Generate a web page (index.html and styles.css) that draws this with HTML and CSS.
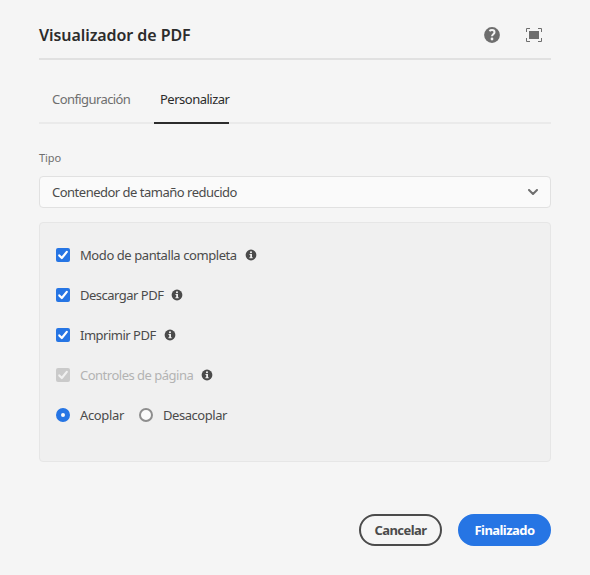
FILE: index.html
```html
<!DOCTYPE html>
<html lang="es">
<head>
<meta charset="utf-8">
<title>Visualizador de PDF</title>
<link rel="stylesheet" href="styles.css">
</head>
<body>
<svg class="defs" width="0" height="0">
  <symbol id="check" viewBox="0 0 14 14"><path d="M3.3 7.4 5.8 10 10.8 3.9" fill="none" stroke="currentColor" stroke-width="2.200" stroke-linecap="round" stroke-linejoin="round"/></symbol>
  <symbol id="info" viewBox="0 0 12 12"><circle cx="6" cy="6" r="5.4" fill="#4b4b4b"/><circle cx="6" cy="3.3" r="1.05" fill="#f0f0f0"/><path d="M4.5 5.1H7v3.2h.7v1H4.4v-1h.8V6.1h-.7z" fill="#f0f0f0"/></symbol>
</svg>
<main class="dialog">
  <header class="header">
    <h1 class="title">Visualizador de PDF</h1>
    <svg class="help" viewBox="0 0 16 16"><circle cx="8" cy="8" r="7.9" fill="#6e6e6e"/><path d="M5.400 4.1C6.200 3.400 7 3.100 8 3.100c1.600 0 2.500.900 2.500 2.200 0 1.900-2.500 2-2.500 4" fill="none" stroke="#f5f5f5" stroke-width="2"/><circle cx="8" cy="12" r="1.4" fill="#f5f5f5"/></svg>
    <svg class="full" viewBox="0 0 16 14"><path d="M3 3h10v8H3z" fill="#6e6e6e"/><path d="M.5 4V.5H4M12 .5h3.500V4M15.500 10v3.500H12M4 13.500H.5V10" fill="none" stroke="#6e6e6e"/></svg>
  </header>
  <nav class="tabs"><a class="tab config">Configuración</a><a class="tab active">Personalizar</a></nav>
  <label class="label">Tipo</label>
  <div class="select"><span class="value">Contenedor de tamaño reducido</span><svg class="chevron" viewBox="0 0 10 6"><path d="m1 1 4 4 4-4" fill="none" stroke="#6e6e6e" stroke-width="2" stroke-linecap="round" stroke-linejoin="round"/></svg></div>
  <section class="panel">
    <div class="row"><svg class="box"><use href="#check"/></svg><span class="modo">Modo de pantalla completa</span><svg class="info"><use href="#info"/></svg></div>
    <div class="row"><svg class="box"><use href="#check"/></svg><span class="descargar">Descargar PDF</span><svg class="info"><use href="#info"/></svg></div>
    <div class="row"><svg class="box"><use href="#check"/></svg><span class="imprimir">Imprimir PDF</span><svg class="info"><use href="#info"/></svg></div>
    <div class="row"><svg class="box off"><use href="#check"/></svg><span class="controles">Controles de página</span><svg class="info"><use href="#info"/></svg></div>
    <div class="row"><i class="radio on"></i><span class="acoplar">Acoplar</span><i class="radio"></i><span class="desacoplar">Desacoplar</span></div>
  </section>
  <footer class="footer"><button class="button cancel">Cancelar</button><button class="button done">Finalizado</button></footer>
</main>
</body>
</html>
```
FILE: styles.css
```css
* { box-sizing: border-box; }
body {
  margin: 0;
  background: #f5f5f5;
  color: #4b4b4b;
  font: 13px/20px "Noto Sans", "Open Sans", sans-serif;
  letter-spacing: -0.5px;
}
.defs { position: absolute; }
svg { display: block; flex: none; }
.dialog { width: 512px; margin-left: 39px; padding-top: 11px; }
.header { display: flex; align-items: center; height: 49px; border-bottom: 2px solid #e1e1e1; }
.title { flex: 1; margin: 0; color: #2c2c2c; font-size: 16px; font-weight: 600; letter-spacing: -0.07px; white-space: nowrap; }
.help { width: 16px; height: 16px; margin-right: 26px; }
.full { width: 16px; height: 14px; margin-right: 9px; }
.tabs { display: flex; height: 64px; border-bottom: 2px solid #eaeaea; }
.tab { height: 64px; padding-top: 29px; color: #6e6e6e; white-space: nowrap; }
.config { width: 102px; margin-left: 13px; letter-spacing: -0.58px; }
.active { width: 75px; padding-left: 6px; border-bottom: 2px solid #2c2c2c; color: #2c2c2c; }
.label { display: block; margin-top: 24px; height: 28px; color: #6e6e6e; font-size: 11px; letter-spacing: -0.1px; }
.select { display: flex; align-items: center; justify-content: space-between; height: 32px; padding: 0 12px; border: 1px solid #e1e1e1; border-radius: 4px; background: #fafafa; }
.chevron { width: 10px; height: 6px; }
.panel { height: 240px; margin-top: 14px; padding: 12px 16px; border: 1px solid #e6e6e6; border-radius: 4px; background: #f0f0f0; }
.row { display: flex; align-items: center; height: 40px; white-space: nowrap; }
.row span { flex: none; margin-left: 10px; }
.box { width: 14px; height: 14px; border-radius: 2px; background: #2675e4; color: #fff; }
.off { background: #cacaca; color: #f0f0f0; }
.info { width: 12px; height: 12px; margin-left: 8px; }
.modo { width: 157px; letter-spacing: -0.42px; }
.descargar { width: 83px; }
.imprimir { width: 76px; }
.controles { width: 113px; color: #b3b3b3; }
.acoplar { width: 59px; letter-spacing: -0.35px; }
.desacoplar { letter-spacing: -0.45px; }
.radio { width: 14px; height: 14px; border: 2px solid #8e8e8e; border-radius: 50%; background: #fafafa; }
.radio.on { border: 5px solid #2675e4; }
.footer { display: flex; justify-content: flex-end; gap: 16px; margin-top: 52px; }
.button { height: 32px; padding: 0; border: 2px solid #4b4b4b; border-radius: 16px; background: transparent; color: #4b4b4b; font: 700 13px/18px "Noto Sans", sans-serif; letter-spacing: -0.55px; }
.cancel { width: 83px; }
.done { width: 93px; border-color: #2675e4; background: #2675e4; color: #fff; }
```
